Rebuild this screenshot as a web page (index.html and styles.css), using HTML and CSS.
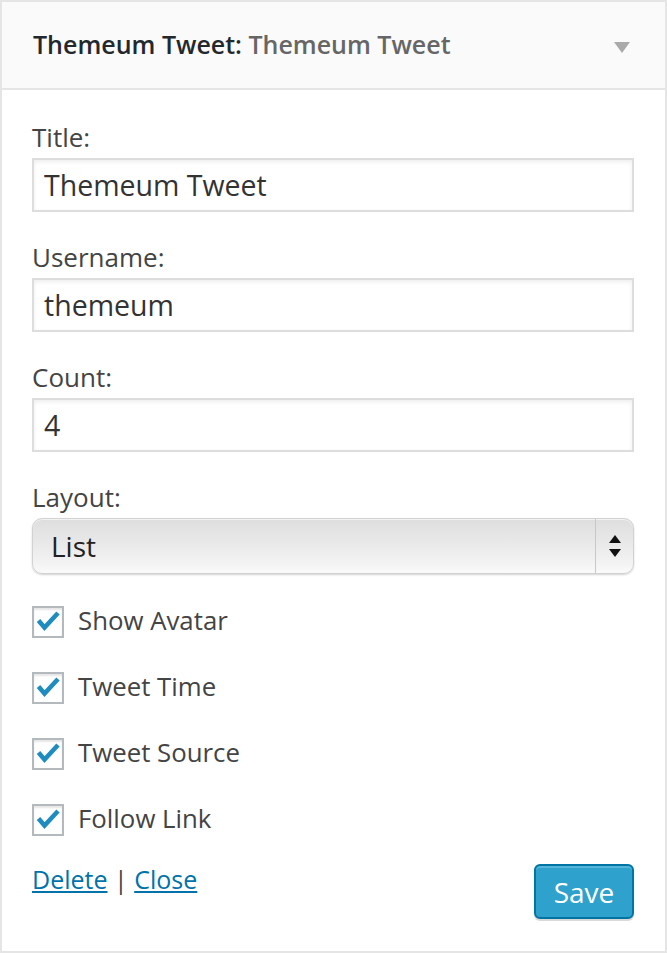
FILE: index.html
```html
<!DOCTYPE html>
<html lang="en">
<head>
<meta charset="utf-8">
<title>Themeum Tweet widget</title>
<link rel="stylesheet" href="styles.css">
</head>
<body>
<div class="widget">
  <div class="widget-top">
    <h3 class="widget-title">Themeum Tweet:<span class="in-title"> Themeum Tweet</span></h3>
    <svg class="toggle" width="16" height="11" viewBox="0 0 16 11"><path d="M0 0H16L8 11Z" fill="#aaaaaa"/></svg>
  </div>
  <div class="widget-inside">
    <div class="field">
      <label class="label">Title:</label>
      <input class="text-input" type="text" value="Themeum Tweet">
    </div>
    <div class="field">
      <label class="label">Username:</label>
      <input class="text-input" type="text" value="themeum">
    </div>
    <div class="field">
      <label class="label">Count:</label>
      <input class="text-input" type="text" value="4">
    </div>
    <div class="field">
      <label class="label">Layout:</label>
      <div class="select">
        <span class="select-value">List</span>
        <span class="select-arrows">
          <svg width="12" height="22" viewBox="0 0 12 22"><path d="M6 0L12 8H0Z M0 14H12L6 22Z" fill="#111"/></svg>
        </span>
      </div>
    </div>
    <div class="checks">
      <div class="check-row"><span class="checkbox"><svg width="32" height="32" viewBox="0 0 32 32"><path d="M6.5 14.5L12.5 21.5L26 7" fill="none" stroke="#1e8cbe" stroke-width="4.5"/></svg></span><span class="check-label">Show Avatar</span></div>
      <div class="check-row"><span class="checkbox"><svg width="32" height="32" viewBox="0 0 32 32"><path d="M6.5 14.5L12.5 21.5L26 7" fill="none" stroke="#1e8cbe" stroke-width="4.5"/></svg></span><span class="check-label">Tweet Time</span></div>
      <div class="check-row"><span class="checkbox"><svg width="32" height="32" viewBox="0 0 32 32"><path d="M6.5 14.5L12.5 21.5L26 7" fill="none" stroke="#1e8cbe" stroke-width="4.5"/></svg></span><span class="check-label">Tweet Source</span></div>
      <div class="check-row"><span class="checkbox"><svg width="32" height="32" viewBox="0 0 32 32"><path d="M6.5 14.5L12.5 21.5L26 7" fill="none" stroke="#1e8cbe" stroke-width="4.5"/></svg></span><span class="check-label">Follow Link</span></div>
    </div>
    <div class="footer">
      <div class="links"><a href="#" class="link">Delete</a> | <a href="#" class="link">Close</a></div>
      <button class="save" type="button">Save</button>
    </div>
  </div>
</div>
</body>
</html>
```
FILE: styles.css
```css
* { box-sizing: border-box; }
html, body { margin: 0; padding: 0; background: #fff; }
body { font-family: "Open Sans", "Liberation Sans", sans-serif; color: #444; }

.widget {
  width: 667px;
  height: 953px;
  border: 2px solid #e5e5e5;
  background: #fff;
}

.widget-top {
  height: 88px;
  background: #fafafa;
  border-bottom: 2px solid #e5e5e5;
  display: flex;
  align-items: flex-start;
  padding: 0 35px 0 31px;
}
.widget-title {
  margin: 24px 0 0;
  font-size: 25px;
  line-height: 36px;
  font-weight: 600;
  color: #23282d;
}
.in-title { color: #666; }
.toggle { margin-left: auto; margin-top: 40px; display: block; }

.widget-inside {
  padding: 29px 31px 0 30px;
  display: flex;
  flex-direction: column;
}

.field { display: flex; flex-direction: column; margin-bottom: 27px; }
.label { font-size: 26px; line-height: 36px; margin-bottom: 3px; color: #444; }

.text-input {
  width: 100%;
  height: 54px;
  border: 2px solid #dddddd;
  box-shadow: inset 0 2px 4px rgba(0,0,0,0.07);
  padding: 0 10px;
  font-family: "Open Sans", "Liberation Sans", sans-serif;
  font-size: 28.5px;
  color: #333;
  background: #fff;
  margin: 0;
  outline: none;
}

.select {
  height: 56px;
  display: flex;
  align-items: stretch;
  border-radius: 10px;
  border: 1px solid #d2d2d2;
  background: linear-gradient(to bottom, #dedede 0%, #e9e9e9 45%, #f4f4f4 85%, #fafafa 100%);
  box-shadow: 0 1px 2px rgba(0,0,0,0.18), inset 0 1px 0 rgba(255,255,255,0.6);
}
.select-value {
  flex: 1;
  font-size: 28px;
  line-height: 54px;
  padding-left: 18px;
  color: #222;
}
.select-arrows {
  width: 38px;
  border-left: 1px solid #c8c8c8;
  display: flex;
  align-items: center;
  justify-content: center;
}
.select-arrows svg { display: block; }

.checks { display: flex; flex-direction: column; gap: 34px; margin-top: 5px; }
.check-row { display: flex; align-items: center; height: 32px; }
.checkbox {
  width: 32px; height: 32px;
  border: 2px solid #b4b9be;
  background: #fff;
  box-shadow: inset 0 2px 2px rgba(0,0,0,0.1);
  position: relative;
  flex: none;
}
.checkbox svg { position: absolute; left: -2px; top: -2px; }
.check-label { font-size: 25.8px; line-height: 32px; margin-left: 14px; padding-bottom: 4px; color: #444; }

.footer { display: flex; justify-content: space-between; align-items: flex-start; margin-top: 25px; }
.links { font-size: 25px; line-height: 36px; color: #444; }
.link { color: #0073aa; text-decoration: underline; }
.save {
  margin-top: 3px;
  width: 100px;
  height: 55px;
  background: #2ea2cc;
  border: 2px solid #0074a2;
  border-radius: 6px;
  box-shadow: inset 0 2px 0 rgba(120,200,230,0.5), 0 2px 0 rgba(0,0,0,0.15);
  color: #fff;
  font-family: "Open Sans", "Liberation Sans", sans-serif;
  font-size: 28px;
  padding: 0;
  line-height: 1;
}
```
